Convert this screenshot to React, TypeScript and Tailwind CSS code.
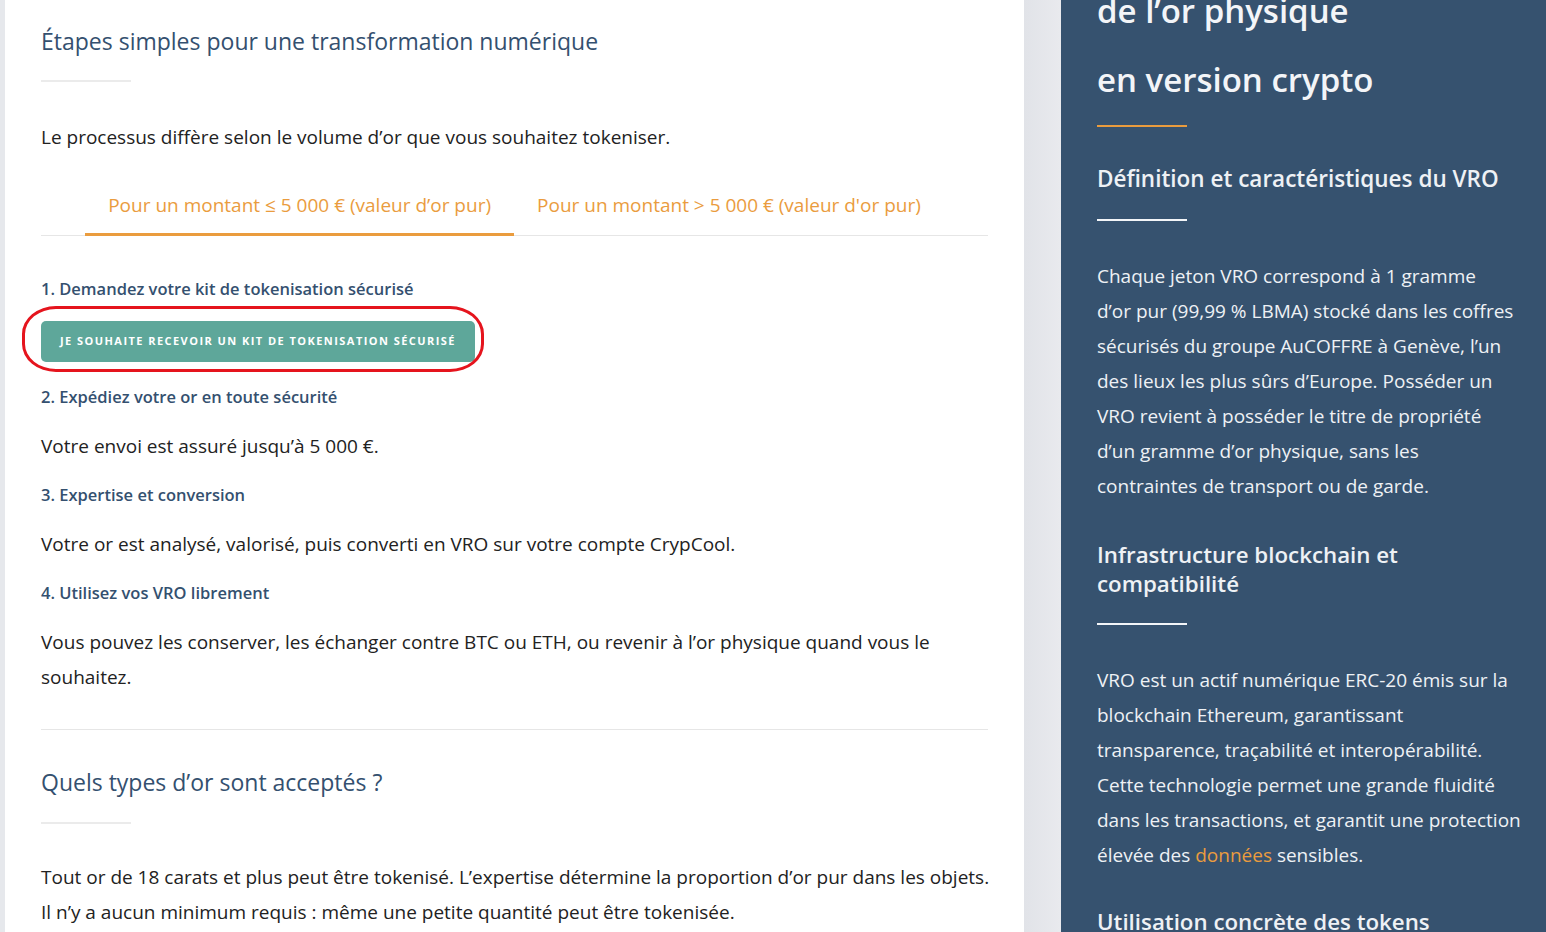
import React from "react";

const font = { fontFamily: '"Open Sans", "Noto Sans", sans-serif' };

function StepTitle({ children, mt }: { children: React.ReactNode; mt: string }) {
  return (
    <h4 className={`${mt} text-[16.5px] leading-[24px] font-semibold text-[#34506f]`}>{children}</h4>
  );
}

export default function App() {
  return (
    <div className="w-[1546px] h-[932px] overflow-hidden flex bg-[#e5e7eb]" style={font}>
      <div className="w-[5px] shrink-0 bg-[#e6e8ec]" />
      <main className="w-[1019px] shrink-0 bg-white px-[36px] pt-[25px] text-[#222]">
        <h2 className="text-[23px] leading-[32px] text-[#34506f]">Étapes simples pour une transformation numérique</h2>
        <div className="mt-[23px] h-[2px] w-[90px] bg-[#ebebeb]" />
        <p className="mt-[38px] text-[19px] leading-[35px]">
          Le processus diffère selon le volume d’or que vous souhaitez tokeniser.
        </p>
        <div className="mt-[24px] flex justify-center border-b border-[#e6e6e6] text-[19px] leading-[28px] text-[#ea9c3e]">
          <div className="px-[23px] pt-[12px] pb-[14px] border-b-[3px] border-[#ea9c3e] -mb-px">
            Pour un montant ≤ 5 000 € (valeur d’or pur)
          </div>
          <div className="px-[23px] pt-[12px] pb-[14px] border-b-[3px] border-transparent -mb-px">
            Pour un montant &gt; 5 000 € (valeur d'or pur)
          </div>
        </div>
        <StepTitle mt="mt-[41px]">1. Demandez votre kit de tokenisation sécurisé</StepTitle>
        <div className="relative mt-[20px] w-fit">
          <button className="h-[41px] px-[19px] rounded-[5px] bg-[#5ea79a] text-white text-[11px] font-bold tracking-[1.45px] uppercase">
            Je souhaite recevoir un kit de tokenisation sécurisé
          </button>
          <div className="absolute left-[-19px] top-[-15px] right-[-9px] bottom-[-10px] border-[3px] border-[#e5141d] rounded-[34px/28px] pointer-events-none" />
        </div>
        <StepTitle mt="mt-[23px]">2. Expédiez votre or en toute sécurité</StepTitle>
        <p className="mt-[19.5px] text-[19px] leading-[35px]">Votre envoi est assuré jusqu’à 5 000 €.</p>
        <StepTitle mt="mt-[19.5px]">3. Expertise et conversion</StepTitle>
        <p className="mt-[19.5px] text-[19px] leading-[35px]">
          Votre or est analysé, valorisé, puis converti en VRO sur votre compte CrypCool.
        </p>
        <StepTitle mt="mt-[19.5px]">4. Utilisez vos VRO librement</StepTitle>
        <p className="mt-[19.5px] text-[19px] leading-[35px]">
          Vous pouvez les conserver, les échanger contre BTC ou ETH, ou revenir à l’or physique quand vous le
          <br />
          souhaitez.
        </p>
        <div className="mt-[34px] h-px bg-[#e6e6e6]" />
        <h2 className="mt-[36px] text-[23px] leading-[32px] text-[#34506f]">Quels types d’or sont acceptés ?</h2>
        <div className="mt-[24px] h-[2px] w-[90px] bg-[#ebebeb]" />
        <p className="mt-[36px] text-[19px] leading-[35px] whitespace-nowrap">
          Tout or de 18 carats et plus peut être tokenisé. L’expertise détermine la proportion d’or pur dans les objets.
          <br />
          Il n’y a aucun minimum requis : même une petite quantité peut être tokenisée.
        </p>
      </main>
      <div className="w-[37px] shrink-0 bg-gradient-to-r from-[#e1e3e8] to-[#e9eaee]" />
      <aside className="flex-1 bg-[#36526f] px-[36px] text-[#eef1f5] whitespace-nowrap">
        <h2 className="mt-[-24.5px] text-[33px] leading-[69px] font-semibold text-[#f3f5f8]">
          de l’or physique
          <br />
          en version crypto
        </h2>
        <div className="mt-[11.5px] h-[2px] w-[90px] bg-[#ea9c3e]" />
        <h3 className="mt-[36px] text-[22.5px] leading-[32px] font-semibold">Définition et caractéristiques du VRO</h3>
        <div className="mt-[24px] h-[2px] w-[90px] bg-[#f3f5f8]" />
        <p className="mt-[37.5px] text-[19px] leading-[35px]">
          Chaque jeton VRO correspond à 1 gramme
          <br />
          d’or pur (99,99 % LBMA) stocké dans les coffres
          <br />
          sécurisés du groupe AuCOFFRE à Genève, l’un
          <br />
          des lieux les plus sûrs d’Europe. Posséder un
          <br />
          VRO revient à posséder le titre de propriété
          <br />
          d’un gramme d’or physique, sans les
          <br />
          contraintes de transport ou de garde.
        </p>
        <h3 className="mt-[36px] text-[22.3px] leading-[29px] font-semibold">
          Infrastructure blockchain et
          <br />
          compatibilité
        </h3>
        <div className="mt-[25.5px] h-[2px] w-[90px] bg-[#f3f5f8]" />
        <p className="mt-[37.5px] text-[19px] leading-[35px]">
          VRO est un actif numérique ERC-20 émis sur la
          <br />
          blockchain Ethereum, garantissant
          <br />
          transparence, traçabilité et interopérabilité.
          <br />
          Cette technologie permet une grande fluidité
          <br />
          dans les transactions, et garantit une protection
          <br />
          élevée des <span className="text-[#ea9c3e]">données</span> sensibles.
        </p>
        <h3 className="mt-[34px] text-[22.3px] leading-[29px] font-semibold">Utilisation concrète des tokens</h3>
      </aside>
    </div>
  );
}
